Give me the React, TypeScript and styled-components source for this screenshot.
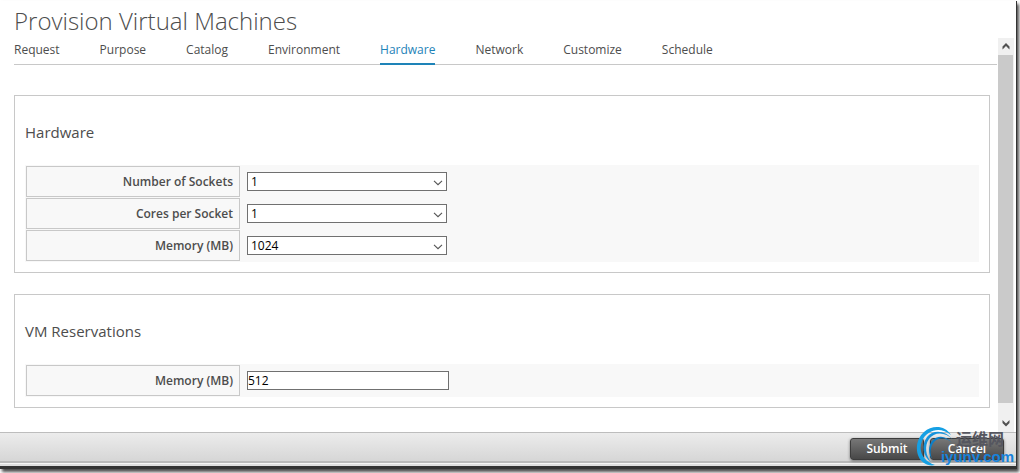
import React, { useState } from "react";
import styled, { createGlobalStyle, css } from "styled-components";

const GlobalStyle = createGlobalStyle`
  * { box-sizing: border-box; }
  body {
    margin: 0;
    background: #fff;
    color: #4d4d4d;
    font-family: "Open Sans", "Liberation Sans", sans-serif;
    font-size: 12px;
  }
  button, input, select { font-family: inherit; }
`;

const Page = styled.div`
  display: flex;
  min-height: 100vh;
  padding: 1px 3px 4px 0;
  overflow: hidden;
`;

const Window = styled.div`
  flex: 1;
  min-width: 0;
  display: flex;
  flex-direction: column;
  background: #fff;
  border-right: 1px solid #333;
  border-bottom: 3px solid #333;
  box-shadow: 2px 3px 3px rgba(0, 0, 0, 0.7);
`;

const Title = styled.h1`
  margin: 0;
  padding: 2px 14px 0;
  font-size: 24px;
  line-height: 35px;
  font-weight: 300;
`;

const Body = styled.div`
  flex: 1;
  display: flex;
  padding-right: 2px;
`;

const Content = styled.main`
  flex: 1;
  min-width: 0;
  padding: 0 1px 24px 14px;
`;

const Tabs = styled.nav`
  display: flex;
  gap: 40px;
  border-bottom: 1px solid #c8c8c8;
`;

const Tab = styled.a<{ $active?: boolean }>`
  margin-bottom: -1px;
  padding-bottom: 2px;
  border-bottom: 2px solid transparent;
  color: #4d4d4d;
  line-height: 23px;
  text-decoration: none;
  ${(p) => p.$active && css`
    color: #1e83b8;
    border-color: #1e83b8;
  `}
`;

const Panels = styled.form`
  display: flex;
  flex-direction: column;
  gap: 21px;
  padding: 30px 7px 0 0;
`;

const Panel = styled.section`
  padding: 0 10px 10px;
  border: 1px solid #c8c8c8;
`;

const PanelTitle = styled.h2`
  margin: 0;
  padding: 25px 0 22px;
  font-size: 15px;
  line-height: 22px;
  font-weight: 400;
`;

const Fields = styled.div`
  display: flex;
  flex-direction: column;
  gap: 1px;
  padding: 1px;
  background: #f8f8f8;
`;

const Field = styled.div`
  display: flex;
  align-items: center;
  gap: 7px;
`;

const FieldLabel = styled.label`
  width: 214px;
  padding: 0 6px;
  border: 1px solid #c8c8c8;
  font-weight: 600;
  line-height: 29px;
  text-align: right;
`;

const control = css`
  height: 19px;
  margin: 0;
  border: 1px solid #707070;
  border-radius: 0;
  background: #fff;
  color: #000;
  font-size: 12px;
  line-height: 17px;
`;

const SelectBox = styled.div`
  position: relative;
  display: flex;
  width: 200px;
  svg {
    position: absolute;
    right: 4px;
    top: 8px;
    pointer-events: none;
  }
`;

const Select = styled.select`
  ${control}
  appearance: none;
  width: 100%;
  padding: 0 20px 0 3px;
`;

const TextInput = styled.input`
  ${control}
  width: 202px;
  padding: 0;
`;

const ScrollBar = styled.div`
  display: flex;
  flex-direction: column;
  width: 16px;
  background: #f0f0f0;
`;

const ScrollArrow = styled.button<{ $down?: boolean }>`
  display: flex;
  justify-content: center;
  align-items: center;
  height: ${(p) => (p.$down ? 18 : 17)}px;
  padding: 0;
  border: 0;
  background: #f0f0f0;
`;

const ScrollThumb = styled.div`
  flex: 1;
  margin: 0 1px 11px 0;
  background: #cacaca;
`;

const Footer = styled.footer`
  position: relative;
  display: flex;
  justify-content: flex-end;
  gap: 6px;
  padding: 5px 12px 1px;
  border-top: 1px solid #bdbdbd;
  background: linear-gradient(#ececec, #d6d6d6);
`;

const FooterEdge = styled.div`
  height: 5px;
  border-top: 2px solid #b9b9b9;
  border-bottom: 2px solid #dedede;
  background: #f5f5f5;
`;

const Action = styled.button`
  width: 74px;
  height: 22px;
  padding: 0;
  border: 1px solid #3c3c3c;
  border-radius: 3px;
  background: linear-gradient(#777, #484848);
  box-shadow: 0 1px 3px rgba(0, 0, 0, 0.5);
  color: #fff;
  font-size: 12px;
  font-weight: 600;
  line-height: 20px;
`;

const Watermark = styled.div`
  position: absolute;
  right: 2px;
  top: -7px;
  width: 98px;
  height: 41px;
  pointer-events: none;
  svg { position: absolute; left: 0; top: 0; }
`;

const WatermarkName = styled.span`
  position: absolute;
  right: 10px;
  top: 3px;
  color: #55565f;
  font: 700 16px/18px "Noto Sans CJK SC", sans-serif;
  white-space: nowrap;
`;

const WatermarkSite = styled.span`
  position: absolute;
  right: 0;
  top: 22px;
  color: #1683dc;
  font: 700 15px/18px "Liberation Sans", sans-serif;
  white-space: nowrap;
`;

const steps = ["Request", "Purpose", "Catalog", "Environment", "Hardware", "Network", "Customize", "Schedule"];

const hardware = [
  { id: "sockets", label: "Number of Sockets", options: ["1", "2", "4"] },
  { id: "cores", label: "Cores per Socket", options: ["1", "2", "4"] },
  { id: "memory", label: "Memory (MB)", options: ["1024", "2048", "4096"] },
];

function Chevron() {
  return (
    <svg width="10" height="6" viewBox="0 0 10 6" fill="none" stroke="#555" strokeWidth="1.1">
      <path d="M1 .8 5 4.7 9 .8" />
    </svg>
  );
}

function Arrow({ down = false }: { down?: boolean }) {
  return (
    <svg width="8" height="7" viewBox="0 0 8 7" fill="#505050">
      <path d={down ? "M.5 0 4 3.5 7.5 0V3L4 6.5.5 3Z" : "M.5 6.5 4 3 7.5 6.5V3.5L4 0 .5 3.5Z"} />
    </svg>
  );
}

function Swirl() {
  return (
    <svg width="40" height="41" viewBox="0 0 40 41">
      <path d="M35 9C29-1 16-1 8 6-2 15-1 31 8 37c3 2 7 3 11 2C7 35 2 25 6 15 11 4 24 0 35 9Z" fill="#16a0e4" />
      <path d="M37 14C30 4 17 3 11 11 5 19 7 31 15 36 10 30 8 20 13 13 18 6 29 5 37 14Z" fill="#1593dc" />
      <path d="M36 17C30 9 21 9 16 15 12 20 12 28 16 33 14 27 14 21 18 16 23 11 30 11 36 17Z" fill="#0c7fc8" />
    </svg>
  );
}

export default function App() {
  const [reservation, setReservation] = useState("512");
  return (
    <>
      <GlobalStyle />
      <Page>
        <Window>
          <Title>Provision Virtual Machines</Title>
          <Body>
            <Content>
              <Tabs>
                {steps.map((step) => (
                  <Tab key={step} href={`#${step.toLowerCase()}`} $active={step === "Hardware"}>
                    {step}
                  </Tab>
                ))}
              </Tabs>
              <Panels id="provision" onSubmit={(e) => e.preventDefault()}>
                <Panel>
                  <PanelTitle>Hardware</PanelTitle>
                  <Fields>
                    {hardware.map(({ id, label, options }) => (
                      <Field key={id}>
                        <FieldLabel htmlFor={id}>{label}</FieldLabel>
                        <SelectBox>
                          <Select id={id} name={id}>
                            {options.map((o) => <option key={o}>{o}</option>)}
                          </Select>
                          <Chevron />
                        </SelectBox>
                      </Field>
                    ))}
                  </Fields>
                </Panel>
                <Panel>
                  <PanelTitle>VM Reservations</PanelTitle>
                  <Fields>
                    <Field>
                      <FieldLabel htmlFor="reservation">Memory (MB)</FieldLabel>
                      <TextInput
                        id="reservation"
                        name="reservation"
                        value={reservation}
                        onChange={(e) => setReservation(e.target.value)}
                      />
                    </Field>
                  </Fields>
                </Panel>
              </Panels>
            </Content>
            <ScrollBar>
              <ScrollArrow type="button" aria-label="Scroll up"><Arrow /></ScrollArrow>
              <ScrollThumb />
              <ScrollArrow type="button" aria-label="Scroll down" $down><Arrow down /></ScrollArrow>
            </ScrollBar>
          </Body>
          <Footer>
            <Action type="submit" form="provision">Submit</Action>
            <Action type="button">Cancel</Action>
            <Watermark>
              <Swirl />
              <WatermarkName>运维网</WatermarkName>
              <WatermarkSite>iyunv.com</WatermarkSite>
            </Watermark>
          </Footer>
          <FooterEdge />
        </Window>
      </Page>
    </>
  );
}
